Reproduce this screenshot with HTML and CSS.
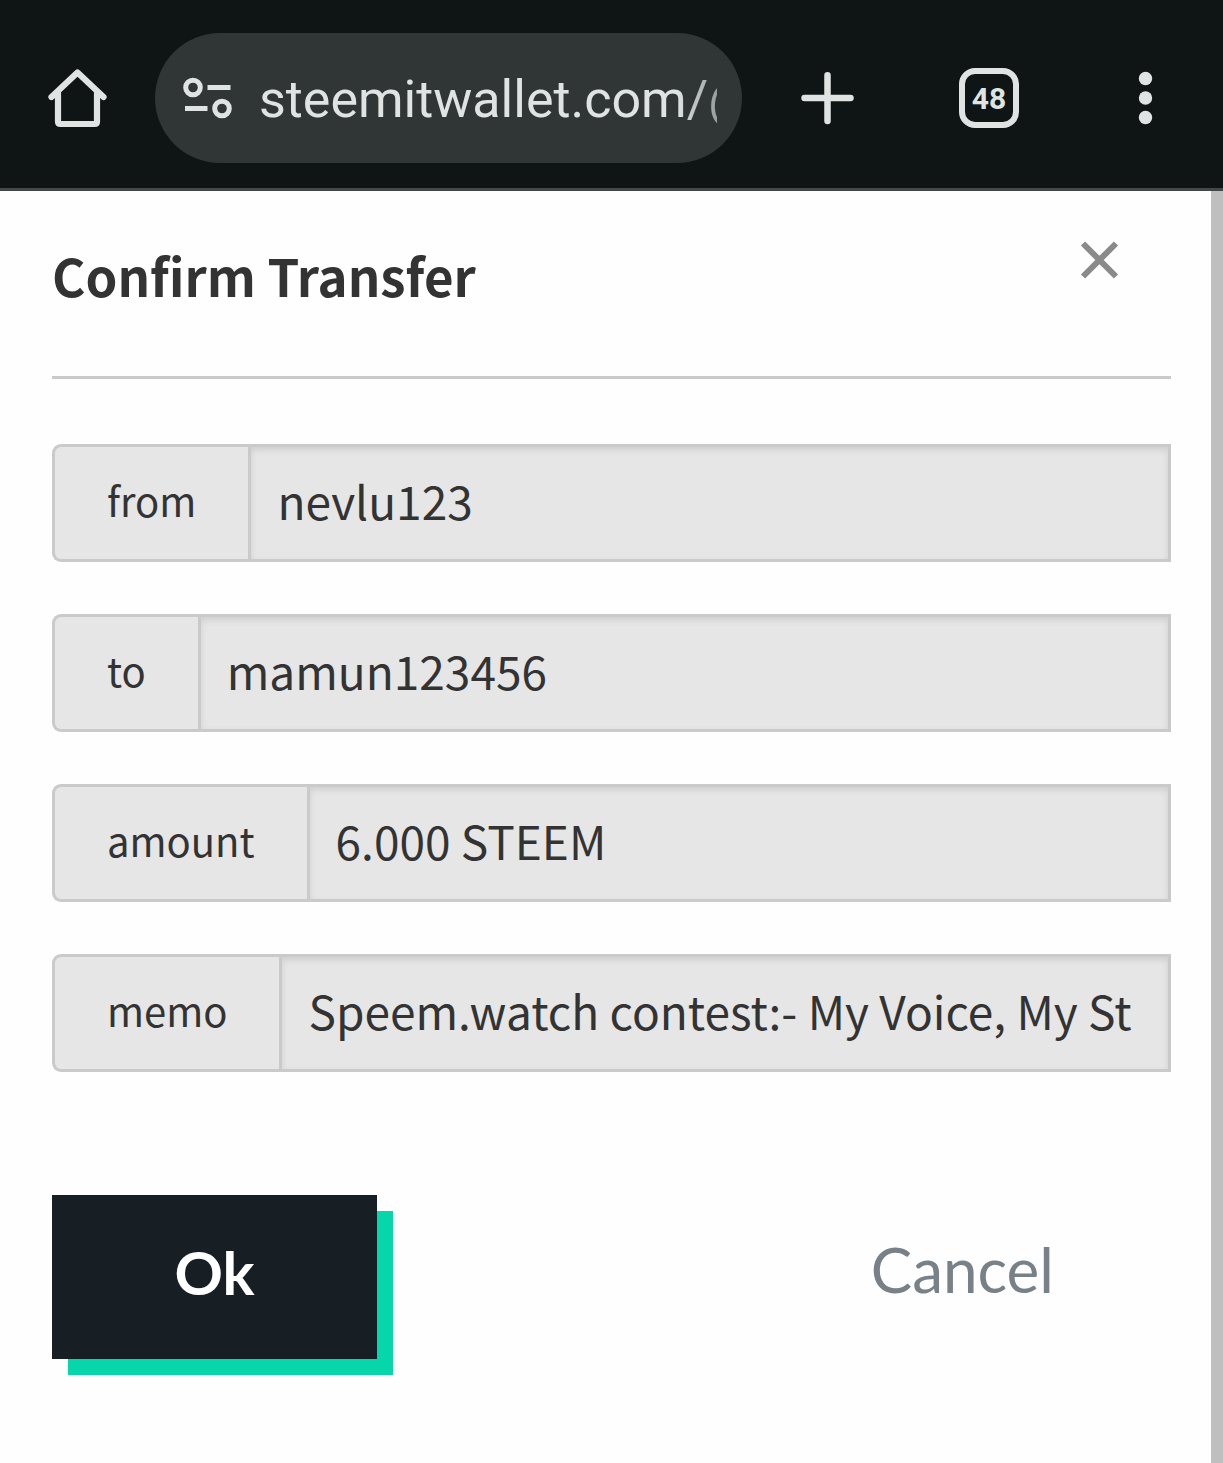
FILE: index.html
```html
<!DOCTYPE html>
<html lang="en">
<head>
    <meta charset="UTF-8">
    <meta name="viewport" content="width=device-width, initial-scale=1.0">
    <title>Confirm Transfer</title>
    <link rel="stylesheet" href="styles.css">
</head>
<body>
    <!-- Browser bar -->
    <header class="toolbar">
        <button type="button" class="icon-btn" aria-label="Home">
            <svg width="60" height="60" viewBox="0 0 60 60" fill="none" stroke="currentColor" stroke-width="6.200" stroke-linecap="round">
                <path d="M4.500 29L30.500 4.500L56.500 29" stroke-linejoin="round"/>
                <path d="M11 25V53.500Q11 56 13.500 56H47.500Q50 56 50 53.500V25"/>
            </svg>
        </button>
        <div class="address">
            <svg class="site-icon" width="50" height="42" viewBox="0 0 50 42" fill="none" stroke="currentColor" stroke-width="5">
                <circle cx="11" cy="10.500" r="7.300"/>
                <path d="M25.500 10.500H48.500M3 31.500H25.500"/>
                <circle cx="40" cy="31.500" r="7.300"/>
            </svg>
            <input type="text" class="url" value="steemitwallet.com/@" aria-label="Address" readonly>
        </div>
        <div class="actions">
            <button type="button" class="icon-btn" aria-label="New tab">
                <svg width="60" height="60" viewBox="0 0 60 60" fill="none" stroke="currentColor" stroke-width="6.500" stroke-linecap="round">
                    <path d="M30.500 7.200V53M7.500 30H53.500"/>
                </svg>
            </button>
            <button type="button" class="icon-btn tabs" aria-label="Tabs">48</button>
            <button type="button" class="icon-btn menu" aria-label="Menu">
                <svg width="48" height="60" viewBox="0 0 48 60" fill="currentColor">
                    <circle cx="24.500" cy="10.500" r="6.700"/>
                    <circle cx="24.500" cy="30" r="6.700"/>
                    <circle cx="24.500" cy="49.500" r="6.700"/>
                </svg>
            </button>
        </div>
    </header>

    <div class="page">
        <main class="modal">
            <div class="modal-head">
                <h1>Confirm Transfer</h1>
                <button type="button" class="close" aria-label="Close">
                    <svg width="40" height="40" viewBox="0 0 40 40" fill="none" stroke="currentColor" stroke-width="6">
                        <path d="M4 3.500L37 36.500M37 3.500L4 36.500"/>
                    </svg>
                </button>
            </div>

            <form class="transfer-form">
                <div class="input-group">
                    <label for="from">from</label>
                    <input type="text" id="from" value="nevlu123" readonly>
                </div>
                <div class="input-group">
                    <label for="to">to</label>
                    <input type="text" id="to" value="mamun123456" readonly>
                </div>
                <div class="input-group">
                    <label for="amount">amount</label>
                    <input type="text" id="amount" value="6.000 STEEM" readonly>
                </div>
                <div class="input-group">
                    <label for="memo">memo</label>
                    <input type="text" id="memo" value="Speem.watch contest:- My Voice, My St" readonly>
                </div>

                <div class="buttons">
                    <button type="submit" class="ok">Ok</button>
                    <button type="button" class="cancel">Cancel</button>
                </div>
            </form>
        </main>
        <div class="scrollbar"></div>
    </div>
</body>
</html>
```

FILE: styles.css
```css
* {
    margin: 0;
    padding: 0;
    box-sizing: border-box;
}
body {
    background: #fefefe;
    color: #333;
    font-family: 'Noto Sans CJK SC', 'Open Sans', sans-serif;
    display: flex;
    flex-direction: column;
    min-height: 100vh;
}
button {
    border: none;
    background: none;
    cursor: pointer;
}
svg {
    display: block;
}

/* Browser bar */
.toolbar {
    display: flex;
    align-items: center;
    padding: 33px 54px 25px 47px;
    background: #0f1515;
    border-bottom: 3px solid #444848;
    color: #dfe4e2;
}
.icon-btn {
    flex: none;
    width: 60px;
    height: 60px;
    color: inherit;
}
.address {
    flex: 1;
    min-width: 0;
    display: flex;
    align-items: center;
    gap: 27px;
    height: 130px;
    margin: 0 55px 0 48px;
    padding: 0 25px 0 27px;
    border-radius: 65px;
    background: #303636;
}
.site-icon {
    flex: none;
}
.url {
    flex: 1;
    min-width: 0;
    padding-top: 2px;
    border: none;
    outline: none;
    background: none;
    color: inherit;
    font: 52px Roboto, sans-serif;
    -webkit-mask-image: linear-gradient(to left, rgba(0, 0, 0, 0.6), #000 40px);
    mask-image: linear-gradient(to left, rgba(0, 0, 0, 0.6), #000 40px);
}
.actions {
    display: flex;
    gap: 102px;
}
.tabs {
    border: 6px solid;
    border-radius: 16px;
    font: bold 30px Roboto, sans-serif;
}
.menu {
    width: 48px;
}

/* Page */
.page {
    flex: 1;
    display: flex;
}
.scrollbar {
    width: 12px;
    background: #bfbfbf;
}
.modal {
    flex: 1;
    min-width: 0;
    padding: 44px 40px 88px 52px;
}
.modal-head {
    display: flex;
    justify-content: space-between;
    align-items: flex-start;
    padding-bottom: 61px;
    border-bottom: 3px solid #cacaca;
    margin-bottom: 65px;
}
h1 {
    font-size: 51px;
    line-height: 80px;
    font-weight: bold;
}
.close {
    margin: 5px 52px 0 0;
    color: #8a8a8a;
}
.input-group {
    display: flex;
    height: 118px;
    margin-bottom: 52px;
}
.input-group label {
    display: flex;
    align-items: center;
    padding: 0 52px 6px;
    border: 3px solid #cacaca;
    border-right: none;
    border-radius: 9px 0 0 9px;
    background: #e6e6e6;
    font-size: 40px;
}
.input-group input {
    flex: 1;
    min-width: 0;
    padding: 0 26px 6px;
    border: 3px solid #cacaca;
    border-radius: 0;
    outline: none;
    background: #e6e6e6;
    box-shadow: inset 0 3px 6px rgba(10, 10, 10, 0.1);
    color: #333;
    font-family: inherit;
    font-size: 46px;
}
.buttons {
    display: flex;
    justify-content: space-between;
    align-items: flex-start;
    margin-top: 123px;
}
.ok {
    width: 325px;
    height: 164px;
    padding-bottom: 10px;
    background: #171f24;
    box-shadow: 16px 16px 0 #06d6a9;
    color: #fff;
    font: bold 60px Lato, sans-serif;
}
.cancel {
    height: 156px;
    padding: 0 117px 8px;
    color: #788187;
    font: 62px Lato, sans-serif;
}
```
